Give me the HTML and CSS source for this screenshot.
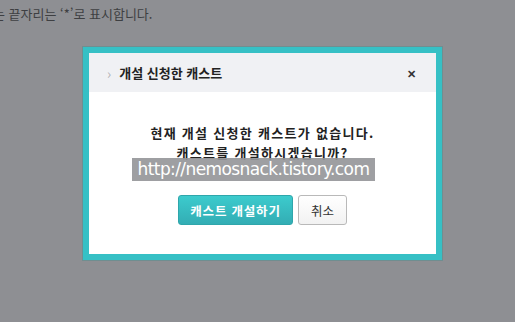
FILE: index.html
```html
<!DOCTYPE html>
<html lang="ko">
<head>
    <meta charset="UTF-8">
    <title>개설 신청한 캐스트</title>
    <link rel="stylesheet" href="styles.css">
</head>
<body>
    <p class="page-note">는 끝자리는 ‘*’로 표시합니다.</p>

    <div class="dialog">
        <div class="dialog-inner">
            <div class="dialog-header">
                <span class="chevron">&#8250;</span>
                <h3>개설 신청한 캐스트</h3>
                <span class="close">&#10005;</span>
            </div>
            <div class="dialog-body">
                <p class="message">현재 개설 신청한 캐스트가 없습니다.<br>캐스트를 개설하시겠습니까?</p>
                <div class="watermark">http://nemosnack.tistory.com</div>
                <div class="buttons">
                    <button class="btn-primary">캐스트 개설하기</button>
                    <button class="btn-cancel">취소</button>
                </div>
            </div>
        </div>
    </div>
</body>
</html>
```

FILE: styles.css
```css
body {
    margin: 0;
    background-color: #8e8f93;
    font-family: "Noto Sans CJK KR", "Noto Sans", sans-serif;
    width: 515px;
    height: 322px;
    overflow: hidden;
}
.page-note {
    margin: 0 0 0 -7px;
    padding-top: 5px;
    font-size: 13px;
    line-height: 18px;
    color: #3e3f42;
    white-space: nowrap;
}
.dialog {
    margin: 23px 0 0 82px;
    width: 361px;
    height: 215px;
    box-sizing: border-box;
    background-color: #36c0c5;
    border: 1px solid #6f8e90;
    padding: 6px;
}
.dialog-inner {
    background: white;
    height: 100%;
    display: flex;
    flex-direction: column;
}
.dialog-header {
    height: 39px;
    flex: none;
    background-color: #f0f1f4;
    display: flex;
    align-items: center;
    padding: 0 20px 0 18px;
}
.chevron {
    color: #b0b1b5;
    font-size: 14px;
    margin-right: 8px;
    line-height: 1;
}
h3 {
    margin: 0;
    flex: 1;
    font-size: 13px;
    font-weight: bold;
    color: #222;
}
.close {
    font-size: 11px;
    font-weight: bold;
    color: #333;
}
.dialog-body {
    position: relative;
    flex: 1;
    display: flex;
    flex-direction: column;
    align-items: center;
}
.message {
    margin: 31px 0 0;
    text-align: center;
    font-size: 13px;
    font-weight: bold;
    line-height: 20px;
    letter-spacing: 1.3px;
    color: #222;
}
.watermark {
    position: absolute;
    left: 43px;
    top: 66px;
    width: 243px;
    height: 23px;
    background-color: rgba(150, 151, 154, 0.92);
    color: white;
    font-family: "DejaVu Sans", sans-serif;
    font-size: 17px;
    line-height: 23px;
    text-align: center;
    letter-spacing: -0.6px;
    white-space: nowrap;
}
.buttons {
    display: flex;
    gap: 5px;
    margin-top: 32px;
}
button {
    font-family: "Noto Sans CJK KR", sans-serif;
    font-size: 12.5px;
    height: 30px;
    border-radius: 3px;
    padding: 0;
    cursor: pointer;
}
.btn-primary {
    width: 115px;
    background: linear-gradient(#3ccbcd, #33adb4);
    border: 1px solid #2fa6ab;
    color: white;
    font-weight: bold;
    letter-spacing: 0.8px;
}
.btn-cancel {
    width: 49px;
    background: linear-gradient(#ffffff, #f2f2f2);
    border: 1px solid #b9b9b9;
    color: #333;
}
```
